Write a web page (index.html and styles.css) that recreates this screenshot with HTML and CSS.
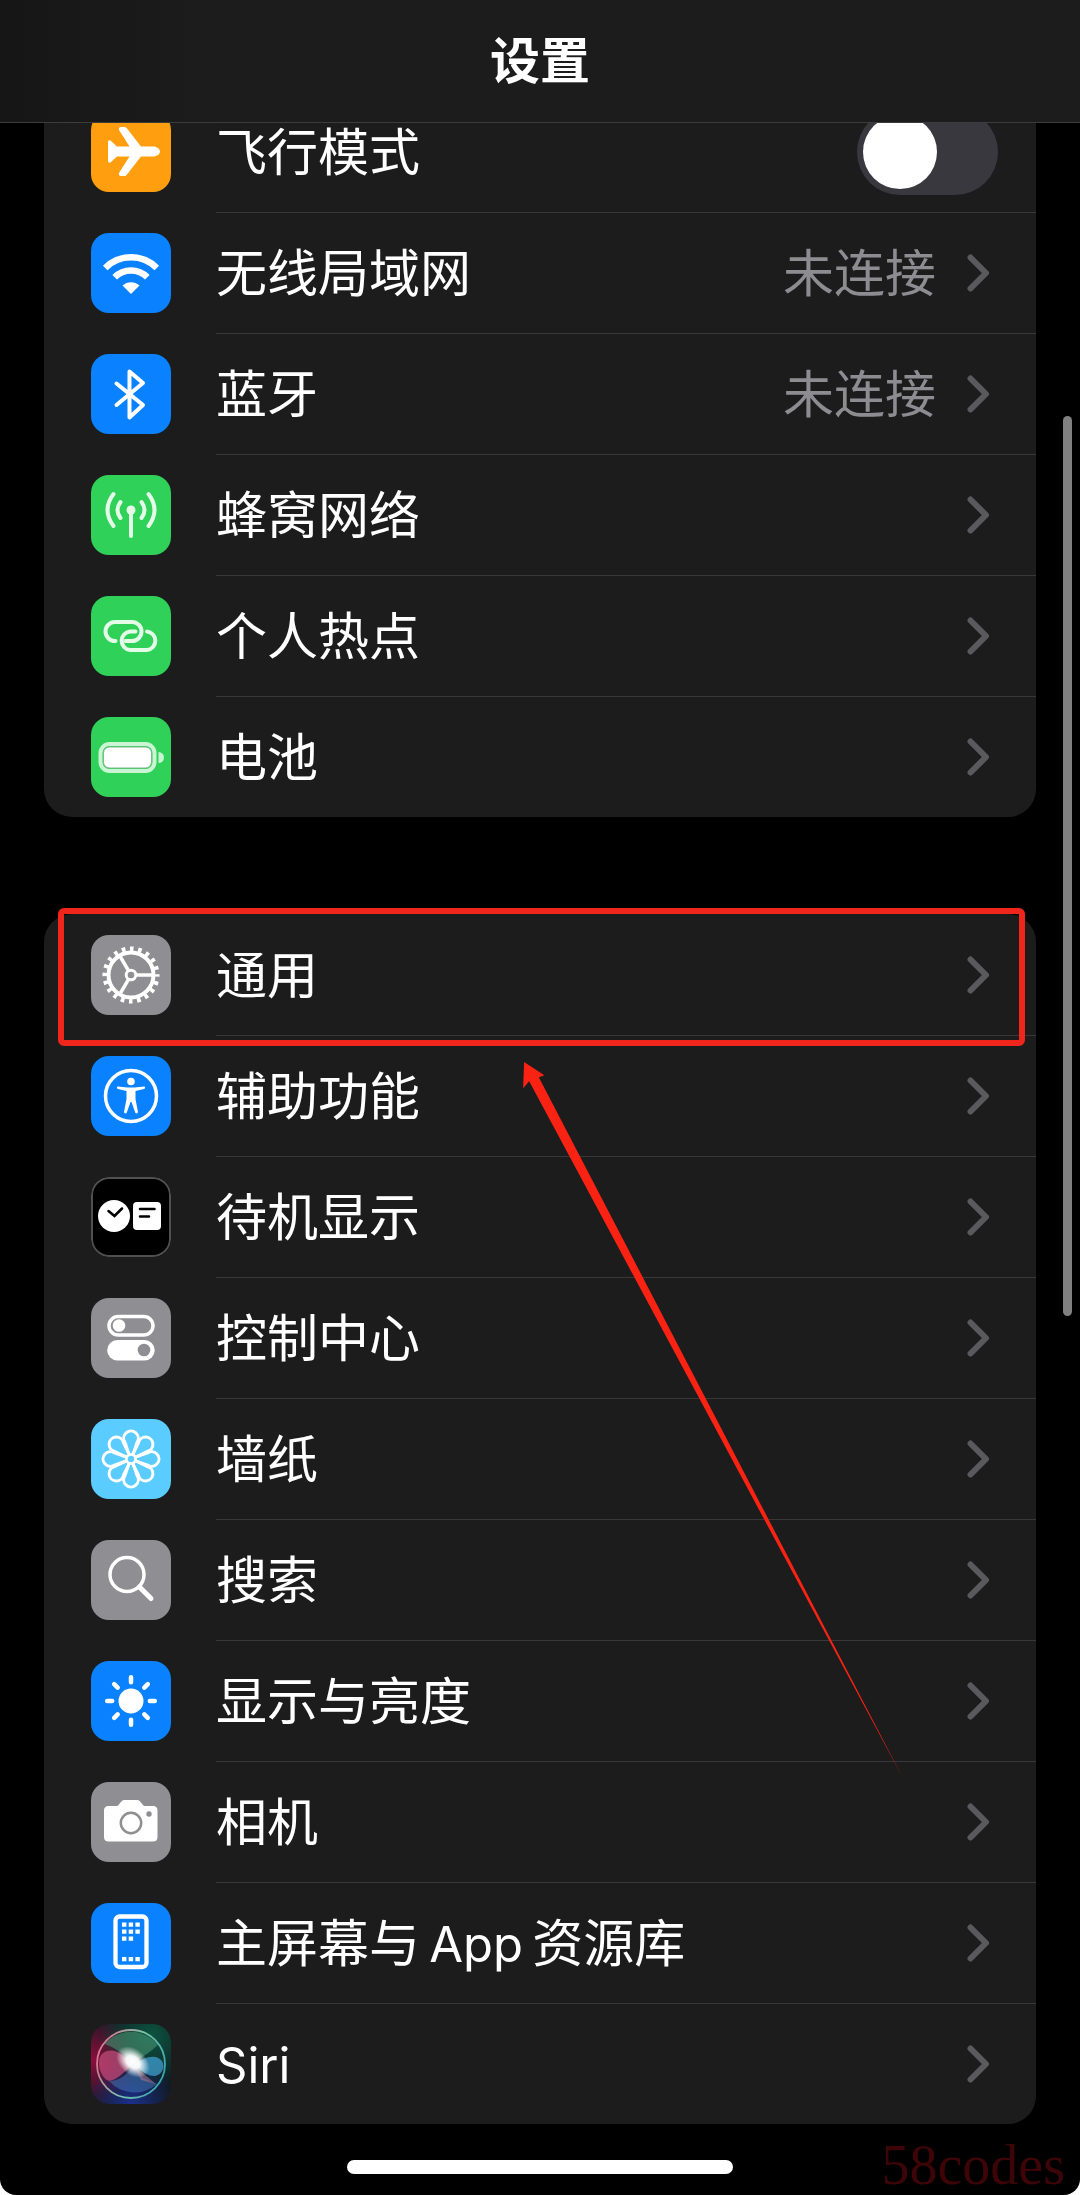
FILE: index.html
```
<!DOCTYPE html>
<html lang="zh-CN">
<head>
  <meta charset="UTF-8" />
  <meta name="viewport" content="width=device-width, initial-scale=1.0"/>
  <title>设置</title>
  <link rel="stylesheet" href="styles.css">
</head>
<body>

  <!-- shared chevron -->
  <svg class="defs" aria-hidden="true">
    <symbol id="chevron" viewBox="0 0 24 40">
      <path d="M4.5 4.5L20 20L4.5 35.500" fill="none" stroke="#5a5a5c" stroke-width="6" stroke-linecap="round" stroke-linejoin="round"/>
    </symbol>
  </svg>

  <div class="screen">
    <header class="nav-bar">
      <h1>设置</h1>
    </header>

    <main class="settings">
      <section class="group">
        <div class="row">
          <svg class="icon orange" viewBox="0 0 80 80" aria-hidden="true">
            <path fill="#fff" d="M17 30c0-2 2-2 3-1l6 5.500h12.500L28 18c-.5-2 .5-3 2-3h3c1.500 0 2 .5 3 1.500L50 34.500h12c4 0 7 2.500 7 5s-3 5-7 5H50L36 62.500c-1 1-1.500 1.500-3 1.500h-3c-1.500 0-2.500-1-2-3l10.500-16.500H26L20 50c-1 1-3 1-3-1z"/>
          </svg>
          <div class="row-body">
            <label class="label" for="airplane">飞行模式</label>
            <input class="toggle" type="checkbox" role="switch" id="airplane">
          </div>
        </div>
        <a class="row" href="#wlan">
          <svg class="icon blue" viewBox="0 0 80 80" aria-hidden="true">
            <g fill="none" stroke="#fff" stroke-width="6.500">
              <path d="M14.200 35a36.500 36.500 0 0 1 51.600 0"/>
              <path d="M23.700 44.300a23 23 0 0 1 32.600 0"/>
            </g>
            <path fill="#fff" d="M31.500 52.500a12.500 12.500 0 0 1 17 0L40 61z"/>
          </svg>
          <div class="row-body">
            <span class="label">无线局域网</span>
            <span class="value">未连接</span>
            <svg class="chevron"><use href="#chevron"/></svg>
          </div>
        </a>
        <a class="row" href="#bluetooth">
          <svg class="icon blue" viewBox="0 0 80 80" aria-hidden="true">
            <path d="M25.500 29.500L52 51L38.500 63.500V17.500L52 29L25.500 51" fill="none" stroke="#fff" stroke-width="4" stroke-linecap="round" stroke-linejoin="round"/>
          </svg>
          <div class="row-body">
            <span class="label">蓝牙</span>
            <span class="value">未连接</span>
            <svg class="chevron"><use href="#chevron"/></svg>
          </div>
        </a>
        <a class="row" href="#cellular">
          <svg class="icon green" viewBox="0 0 80 80" aria-hidden="true">
            <g fill="none" stroke="#e4fbe8" stroke-width="4" stroke-linecap="round">
              <path d="M40 35v26"/>
              <path d="M29.500 27q-6 8 0 16M50.500 27q6 8 0 16"/>
              <path d="M22.500 19q-12 16 0 32M57.500 19q12 16 0 32"/>
            </g>
            <circle cx="40" cy="35" r="4.500" fill="#e4fbe8"/>
          </svg>
          <div class="row-body">
            <span class="label">蜂窝网络</span>
            <svg class="chevron"><use href="#chevron"/></svg>
          </div>
        </a>
        <a class="row" href="#hotspot">
          <svg class="icon green" viewBox="0 0 80 80" aria-hidden="true">
            <g fill="none" stroke="#e4fbe8" stroke-width="4" stroke-linecap="round">
              <path d="M24.500 45H24a9.500 9.500 0 0 1 0-19h17a9.500 9.500 0 0 1 0 19h-6.500"/>
              <path d="M56 35.500a9.300 9.300 0 0 1 0 18.500H39a9.300 9.300 0 0 1 0-18.500h5.500"/>
            </g>
          </svg>
          <div class="row-body">
            <span class="label">个人热点</span>
            <svg class="chevron"><use href="#chevron"/></svg>
          </div>
        </a>
        <a class="row" href="#battery">
          <svg class="icon green" viewBox="0 0 80 80" aria-hidden="true">
            <rect x="9.500" y="27" width="54" height="27" rx="9" fill="none" stroke="#c9f5d2" stroke-width="4"/>
            <rect x="12.500" y="30" width="48" height="21" rx="6" fill="#fff" stroke="#7fb98b"/>
            <path d="M67.500 35a5.500 5.500 0 0 1 0 11z" fill="#c9f5d2"/>
          </svg>
          <div class="row-body">
            <span class="label">电池</span>
            <svg class="chevron"><use href="#chevron"/></svg>
          </div>
        </a>
      </section>

      <section class="group">
        <a class="row" href="#general">
          <svg class="icon gray" viewBox="0 0 80 80" aria-hidden="true">
            <g fill="none" stroke="#fff">
              <circle cx="40" cy="40" r="26.300" stroke-width="4.500" stroke-dasharray="3.600 4.662" stroke-dashoffset="1.800"/>
              <circle cx="40" cy="40" r="22.500" stroke-width="4"/>
              <circle cx="40" cy="40" r="4.800" stroke-width="3"/>
              <path d="M45.500 40H61M37.200 35.200L29.500 22M37.200 44.800L29.500 58" stroke-width="3.500"/>
            </g>
          </svg>
          <div class="row-body">
            <span class="label">通用</span>
            <svg class="chevron"><use href="#chevron"/></svg>
          </div>
        </a>
        <a class="row" href="#accessibility">
          <svg class="icon blue" viewBox="0 0 80 80" aria-hidden="true">
            <circle cx="40" cy="40" r="25.500" fill="none" stroke="#fff" stroke-width="3.500"/>
            <circle cx="40" cy="25.500" r="3.800" fill="#fff"/>
            <path fill="#fff" d="M27 30.500l9.500 1h7l9.500-1c1.500 0 1.500 2 0 2.500L44.500 35v8l2.500 13c0 1.500-2.300 2-2.800.5L40.500 46h-1l-3.700 10.500c-.5 1.500-2.800 1-2.800-.5L35.500 43v-8L27 33c-1.500-.5-1.500-2.500 0-2.500z"/>
          </svg>
          <div class="row-body">
            <span class="label">辅助功能</span>
            <svg class="chevron"><use href="#chevron"/></svg>
          </div>
        </a>
        <a class="row" href="#standby">
          <svg class="icon black" viewBox="0 0 80 80" aria-hidden="true">
            <rect x="1" y="1" width="78" height="78" rx="17" fill="none" stroke="#505052" stroke-width="2"/>
            <circle cx="23" cy="39" r="16" fill="#fff"/>
            <rect x="42" y="25" width="28" height="28" rx="4" fill="#fff"/>
            <path d="M17.500 34l6 5l7.500-7.500M49 32h14.500M49 39.500h9" fill="none" stroke="#000" stroke-width="2.500" stroke-linecap="round"/>
          </svg>
          <div class="row-body">
            <span class="label">待机显示</span>
            <svg class="chevron"><use href="#chevron"/></svg>
          </div>
        </a>
        <a class="row" href="#control-center">
          <svg class="icon gray" viewBox="0 0 80 80" aria-hidden="true">
            <rect x="18" y="18.500" width="44" height="18.500" rx="9.200" fill="none" stroke="#fff" stroke-width="3.500"/>
            <circle cx="28" cy="27.500" r="6.300" fill="#fff"/>
            <rect x="16.200" y="42" width="47.500" height="20.500" rx="10.200" fill="#fff"/>
            <circle cx="53" cy="52" r="6.300" fill="#8e8e93"/>
          </svg>
          <div class="row-body">
            <span class="label">控制中心</span>
            <svg class="chevron"><use href="#chevron"/></svg>
          </div>
        </a>
        <a class="row" href="#wallpaper">
          <svg class="icon cyan" viewBox="0 0 80 80" aria-hidden="true">
            <defs>
              <path id="petal" d="M-1.500-3L-6-16.500A7.300 7.300 0 1 1 6-16.500L1.500-3"/>
            </defs>
            <g transform="translate(40 40)" fill="none" stroke="#fff" stroke-width="3">
              <use href="#petal"/>
              <use href="#petal" transform="rotate(45)"/>
              <use href="#petal" transform="rotate(90)"/>
              <use href="#petal" transform="rotate(135)"/>
              <use href="#petal" transform="rotate(180)"/>
              <use href="#petal" transform="rotate(225)"/>
              <use href="#petal" transform="rotate(270)"/>
              <use href="#petal" transform="rotate(315)"/>
              <circle r="5" stroke-width="2"/>
            </g>
          </svg>
          <div class="row-body">
            <span class="label">墙纸</span>
            <svg class="chevron"><use href="#chevron"/></svg>
          </div>
        </a>
        <a class="row" href="#search">
          <svg class="icon gray" viewBox="0 0 80 80" aria-hidden="true">
            <circle cx="36" cy="34.500" r="17" fill="none" stroke="#fff" stroke-width="3.500"/>
            <path d="M48.500 47L60 58.500" stroke="#fff" stroke-width="5" stroke-linecap="round"/>
          </svg>
          <div class="row-body">
            <span class="label">搜索</span>
            <svg class="chevron"><use href="#chevron"/></svg>
          </div>
        </a>
        <a class="row" href="#display">
          <svg class="icon blue" viewBox="0 0 80 80" aria-hidden="true">
            <circle cx="40" cy="40" r="12.500" fill="#fff"/>
            <path d="M40 21.200v-5M40 58.800v5M21.200 40h-5M58.800 40h5M26.700 26.700l-3.500-3.500M53.300 53.300l3.500 3.500M26.700 53.300l-3.500 3.500M53.300 26.700l3.500-3.500" stroke="#fff" stroke-width="4.500" stroke-linecap="round"/>
          </svg>
          <div class="row-body">
            <span class="label">显示与亮度</span>
            <svg class="chevron"><use href="#chevron"/></svg>
          </div>
        </a>
        <a class="row" href="#camera">
          <svg class="icon gray" viewBox="0 0 80 80" aria-hidden="true">
            <path fill="#fff" d="M17.500 24H26c2 0 4-6 7-6h13.500c3 0 5 6 7 6H62c3 0 4.500 1.500 4.500 4.500V55c0 3-1.500 4.500-4.500 4.500H17.500c-3 0-4.500-1.500-4.500-4.500V28.500c0-3 1.500-4.500 4.500-4.500z"/>
            <circle cx="40" cy="41" r="10.200" fill="none" stroke="#8e8e93" stroke-width="2.500"/>
            <circle cx="58" cy="32" r="2.700" fill="#8e8e93"/>
          </svg>
          <div class="row-body">
            <span class="label">相机</span>
            <svg class="chevron"><use href="#chevron"/></svg>
          </div>
        </a>
        <a class="row" href="#home-screen">
          <svg class="icon blue" viewBox="0 0 80 80" aria-hidden="true">
            <rect x="24.500" y="13.500" width="31" height="50.500" rx="4" fill="none" stroke="#fff" stroke-width="4.300"/>
            <path d="M31 21.700h18M31 28.700h18M31 35.700h12M31 56.200h18" stroke="#fff" stroke-width="4.200" stroke-dasharray="4.400 2.300"/>
          </svg>
          <div class="row-body">
            <span class="label">主屏幕与&thinsp;<span class="latin">App</span>&thinsp;资源库</span>
            <svg class="chevron"><use href="#chevron"/></svg>
          </div>
        </a>
        <a class="row" href="#siri">
          <svg class="icon" viewBox="0 0 80 80" aria-hidden="true">
            <defs>
              <radialGradient id="siri-red" cx="0" cy=".45" r=".6">
                <stop offset="0" stop-color="#8f0d3c"/>
                <stop offset="1" stop-color="#8f0d3c" stop-opacity="0"/>
              </radialGradient>
              <radialGradient id="siri-green" cx=".75" cy=".15" r=".65">
                <stop offset="0" stop-color="#0d5440"/>
                <stop offset="1" stop-color="#0d5440" stop-opacity="0"/>
              </radialGradient>
              <radialGradient id="siri-blue" cx=".5" cy="1" r=".55">
                <stop offset="0" stop-color="#1c2f8c"/>
                <stop offset="1" stop-color="#1c2f8c" stop-opacity="0"/>
              </radialGradient>
              <radialGradient id="siri-glow">
                <stop offset="0" stop-color="#fff"/>
                <stop offset=".4" stop-color="#fff" stop-opacity=".95"/>
                <stop offset="1" stop-color="#fff" stop-opacity="0"/>
              </radialGradient>
              <linearGradient id="siri-ring" x1="0" y1=".3" x2="1" y2=".7">
                <stop offset="0" stop-color="#d9748f"/>
                <stop offset=".5" stop-color="#7fc2a8"/>
                <stop offset="1" stop-color="#35a5b5"/>
              </linearGradient>
            </defs>
            <rect width="80" height="80" rx="18" fill="#101a22"/>
            <rect width="80" height="80" rx="18" fill="url(#siri-red)"/>
            <rect width="80" height="80" rx="18" fill="url(#siri-green)"/>
            <rect width="80" height="80" rx="18" fill="url(#siri-blue)"/>
            <path d="M14 20a34 34 0 0 1 53 1Q57 30 42 39Q28 25 14 20z" fill="#4c9a78" opacity=".55"/>
            <path d="M41 41C32 27 18 22 10 31c-5 9 0 23 8 26c8-1 14-8 23-16z" fill="#c04a78" opacity=".75"/>
            <path d="M43 41c10-8 22-12 28-4c4 7-1 14-7 15c-8 0-14-5-21-11z" fill="#3f9fd0" opacity=".75"/>
            <path d="M18 57Q32 57 42 42Q50 56 66 60a34 34 0 0 1-48-3z" fill="#4a86c9" opacity=".45"/>
            <path d="M43 42L65 60L50 56z" fill="#9c6f8d" opacity=".6"/>
            <circle cx="40" cy="40" r="34" fill="none" stroke="url(#siri-ring)" stroke-width="1.800"/>
            <ellipse cx="42" cy="38" rx="19" ry="13" transform="rotate(40 42 38)" fill="url(#siri-glow)"/>
          </svg>
          <div class="row-body">
            <span class="label"><span class="latin">Siri</span></span>
            <svg class="chevron"><use href="#chevron"/></svg>
          </div>
        </a>

        <!-- callout on the first row -->
        <div class="highlight"></div>
        <svg class="arrow" viewBox="0 0 375 707" aria-hidden="true">
          <path fill="#fa2313" d="M1 0L21 13L15.500 15L375 707L6 19L0 26z"/>
        </svg>
      </section>
    </main>

    <div class="home-indicator"></div>
    <div class="scrollbar"></div>
    <div class="watermark">58codes</div>
  </div>

</body>
</html>
```
FILE: styles.css
```
* {
  box-sizing: border-box;
}
body {
  margin: 0;
  background: #fff;
  color: #fff;
  font-family: Inter, "Noto Sans CJK SC", sans-serif;
  font-size: 51px;
  line-height: 72px;
}
.defs {
  display: none;
}
.screen {
  position: relative;
  min-height: 100vh;
  padding: 91px 44px 21px;
  background: #000;
  border-radius: 0 0 16px 16px;
}

/* title bar, the list scrolls under it */
.nav-bar {
  position: fixed;
  top: 0;
  left: 0;
  right: 0;
  z-index: 2;
  display: flex;
  align-items: center;
  justify-content: center;
  height: 123px;
  background: linear-gradient(to right, #161616, #1c1c1c 20%);
  border-bottom: 1px solid #3c3c3c;
}
.nav-bar h1 {
  margin: 0;
  font-size: 50px;
  font-weight: 700;
}

.settings {
  display: flex;
  flex-direction: column;
  gap: 97px;
}
.group {
  position: relative;
  background: #1c1c1d;
  border-radius: 28px;
}
.row {
  display: flex;
  align-items: center;
  gap: 45px;
  padding-left: 47px;
  color: #fff;
  text-decoration: none;
}
.row-body {
  flex: 1;
  display: flex;
  align-items: center;
  min-height: 121px;
  padding-right: 38px;
  border-top: 1px solid transparent;
}
.row + .row .row-body {
  border-top-color: #38383a;
}
.label {
  flex: 1;
  padding-top: 2px;
}
.latin {
  font-size: 49px;
}
.value {
  margin-right: 30px;
  padding-top: 2px;
  color: #8d8d91;
}
.chevron {
  flex: none;
  width: 24px;
  height: 40px;
  margin-right: 8px;
}

.icon {
  flex: none;
  width: 80px;
  height: 80px;
  border-radius: 18px;
}
.orange { background: #ff9f0f; }
.blue { background: #0a82ff; }
.green { background: #30d158; }
.gray { background: #8e8e93; }
.black { background: #000; }
.cyan { background: #5accff; }

.toggle {
  appearance: none;
  display: flex;
  width: 141px;
  height: 86px;
  margin: 0;
  padding: 6px;
  border-radius: 43px;
  background: #39383f;
}
.toggle::before {
  content: "";
  width: 74px;
  height: 74px;
  border-radius: 50%;
  background: #fff;
}
.toggle:checked {
  justify-content: flex-end;
  background: #30d158;
}

.highlight {
  position: absolute;
  top: -6px;
  left: 14px;
  right: 11px;
  height: 138px;
  border: 6px solid #f0251c;
  border-radius: 6px;
  pointer-events: none;
}
.arrow {
  position: absolute;
  top: 148px;
  left: 479px;
  width: 380px;
  height: 716px;
  pointer-events: none;
}

.home-indicator {
  width: 386px;
  height: 14px;
  margin: 36px auto 0;
  border-radius: 7px;
  background: #fff;
}
.scrollbar {
  position: absolute;
  top: 416px;
  right: 8px;
  width: 9px;
  height: 900px;
  border-radius: 5px;
  background: #808080;
}
.watermark {
  position: absolute;
  right: 15px;
  bottom: 0;
  color: #3d0508;
  font-family: "Liberation Serif", serif;
  font-size: 56px;
  line-height: 60px;
}
```
